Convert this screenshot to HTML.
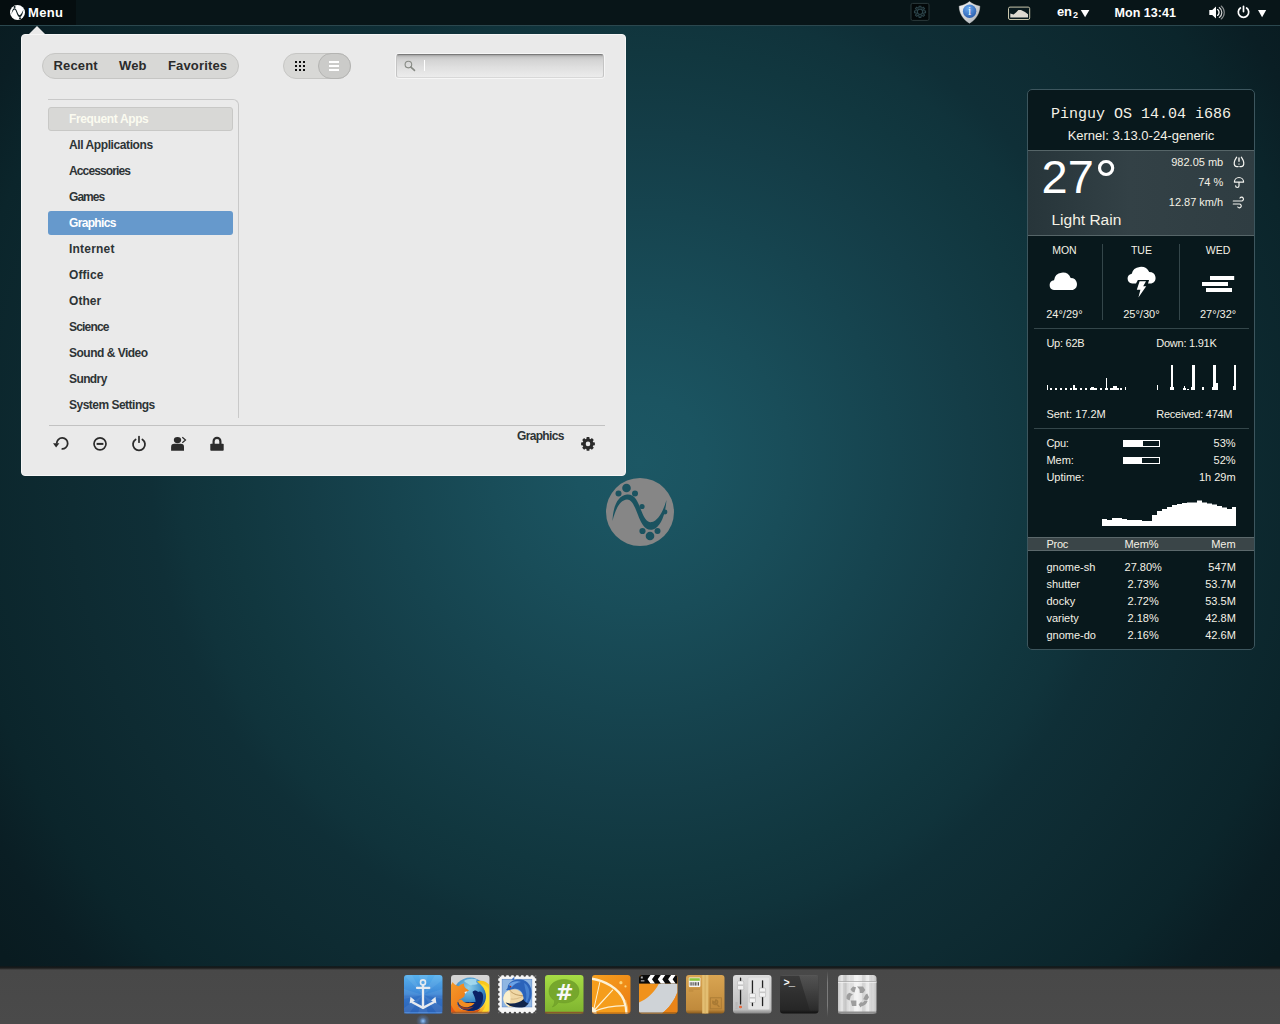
<!DOCTYPE html>
<html>
<head>
<meta charset="utf-8">
<title>Desktop</title>
<style>
*{box-sizing:border-box;margin:0;padding:0}
html,body{width:1280px;height:1024px;overflow:hidden}
body{position:relative;font-family:"Liberation Sans",sans-serif;
background:#091b20 radial-gradient(circle at 640px 462px,rgb(28,87,100) 0,rgb(27,84,97) 65px,rgb(25,77,89) 150px,rgb(22,68,79) 250px,rgb(20,61,71) 330px,rgb(17,55,63) 410px,rgb(16,51,59) 460px,rgb(15,47,55) 490px,rgb(14,43,50) 570px,rgb(11,37,43) 685px,rgb(10,30,36) 745px,rgb(9,27,32) 805px);}
.abs{position:absolute}
/* top panel */
#panel{position:absolute;left:0;top:0;width:1280px;height:26px;background:#081518;border-bottom:1px solid #2b474e}
#menubtn{position:absolute;left:0;top:0;width:76px;height:25px;background:#050d0f}
#panel .t{position:absolute;color:#fff;font-weight:bold;font-size:13px;line-height:25px;top:0;white-space:nowrap}
/* popup */
#popup{position:absolute;left:21px;top:34px;width:605px;height:442px;background:#eaeaea;border:1px solid #f6f6f6;border-radius:4px}
#arrow{position:absolute;left:28px;top:26px;width:0;height:0;border-left:9px solid transparent;border-right:9px solid transparent;border-bottom:9px solid #eaeaea}
.pill{position:absolute;background:#d8d8d6;border:1px solid #c6c6c4;border-radius:13px}
.pill span{position:absolute;top:0;line-height:24px;font-size:13px;font-weight:bold;color:#2b2b2b;white-space:nowrap;letter-spacing:.15px}
#cats{position:absolute;left:48px;top:99px;width:191px;height:319px;border-top:1px solid #c9c9c9;border-right:1px solid #c9c9c9;border-top-right-radius:6px}
.cat{position:absolute;left:48px;width:185px;height:24px;line-height:25px;padding-left:21px;font-size:12px;font-weight:bold;color:#2e3436;letter-spacing:-.45px;border-radius:3px;white-space:nowrap}
#search{position:absolute;left:396px;top:54px;width:208px;height:24px;border-radius:3px;border:1px solid #c4c4c4;border-top-color:#7a7a7a;border-bottom-color:#d8d8d8;box-shadow:0 0 0 1px rgba(255,255,255,.55);background:linear-gradient(#a2a2a2 0,#c6c6c6 2px,#d3d3d3 5px,#dfdfdf 12px,#ececec 100%)}
/* conky */
#conky{position:absolute;left:1027px;top:89px;width:228px;height:561px;border:1px solid #3d565e;border-radius:5px;background:#08181c;overflow:hidden;color:#f4f1e6}
#conky .x{position:absolute;white-space:nowrap;font-size:11px;line-height:13px}
#conky .r{text-align:right}
#conky .hl{position:absolute;left:6px;width:215px;height:1px;background:#34464a}
/* dock */
#dock{position:absolute;left:0;top:966px;width:1280px;height:58px;background:linear-gradient(rgba(16,22,24,.55) 0,#15191a 1px,#1b1c1c 2px,#333 3px,#484848 4px,#4a4a4a 100%)}
.ic{position:absolute;top:975px;width:39px;height:39px}
</style>
</head>
<body>
<!-- wallpaper logo -->
<svg class="abs" style="left:606px;top:478px" width="68" height="68" viewBox="0 0 68 68">
<circle cx="34" cy="34" r="34" fill="#868686"/>
<g fill="#1b5360">
<path d="M6.5 43 C7 28 12 17.5 21 16.5 C29 16 32 24 35 32 C38 40 41 45 46 44 C52 42.5 57 34 60.5 22 C59.5 36 55 49 47 51.5 C39 53.5 35 45 32 37 C29 29 26 21.5 21 21.5 C14 22 9.5 31 6.5 43Z"/>
<circle cx="20.5" cy="10" r="4.3"/><circle cx="12.5" cy="15.5" r="3"/><circle cx="29" cy="15.5" r="3"/>
<circle cx="36" cy="28.5" r="2.6"/><circle cx="59" cy="34" r="2.4"/>
<circle cx="44" cy="58" r="4.3"/><circle cx="36.5" cy="53" r="3.1"/><circle cx="51.5" cy="53" r="3"/>
</g>
</svg>

<!-- TOP PANEL -->
<div id="panel">
<div id="menubtn"></div>
<svg class="abs" style="left:10px;top:5px" width="15" height="15" viewBox="0 0 15 15"><circle cx="7.5" cy="7.5" r="7.5" fill="#fff"/><path d="M1.5 9.5 C2 5 3.2 3.2 4.6 3.2 C6.2 3.2 7 6 8 8.5 C8.8 10.3 9.6 10.6 10.6 9.6 C11.8 8.3 12.6 6.5 13.4 4.5 C13 8 12 11.6 10 12 C8.2 12.2 7.4 10 6.6 8 C5.8 6 5.4 4.6 4.6 4.6 C3.4 4.8 2.3 7 1.5 9.5Z" fill="#0a1a1e"/><circle cx="4.6" cy="2" r="1" fill="#0a1a1e"/><circle cx="10" cy="13.2" r="1" fill="#0a1a1e"/></svg>
<div class="t" style="left:28px;letter-spacing:.35px">Menu</div>
<svg class="abs" style="left:900px;top:0" width="380" height="25" viewBox="900 0 380 25">
<defs><linearGradient id="gSh" x1="0" y1="0" x2="1" y2="1"><stop offset="0" stop-color="#fbfbfb"/><stop offset="1" stop-color="#a9adb2"/></linearGradient><radialGradient id="gI" cx=".4" cy=".3" r=".8"><stop offset="0" stop-color="#6aaaf0"/><stop offset="1" stop-color="#2456a8"/></radialGradient></defs>
<rect x="911" y="3.4" width="18" height="17" rx="1.5" fill="#030809" stroke="#2b3a3c" stroke-width="1"/>
<path d="M918.98 7.73 L919.12 6.27 L920.88 6.27 L921.02 7.73 L922.16 8.20 L923.29 7.27 L924.53 8.51 L923.60 9.64 L924.07 10.78 L925.53 10.92 L925.53 12.68 L924.07 12.82 L923.60 13.96 L924.53 15.09 L923.29 16.33 L922.16 15.40 L921.02 15.87 L920.88 17.33 L919.12 17.33 L918.98 15.87 L917.84 15.40 L916.71 16.33 L915.47 15.09 L916.40 13.96 L915.93 12.82 L914.47 12.68 L914.47 10.92 L915.93 10.78 L916.40 9.64 L915.47 8.51 L916.71 7.27 L917.84 8.20Z" fill="none" stroke="#2c444a" stroke-width="1.1"/><circle cx="920" cy="11.8" r="2.7" fill="none" stroke="#2c444a" stroke-width="1.1"/>
<path d="M969.5 1.6 C972.5 4 976 5.6 979.8 6.2 C979.6 14 975.5 19.6 969.5 23.2 C963.5 19.6 959.4 14 959.2 6.2 C963 5.6 966.5 4 969.5 1.6Z" fill="url(#gSh)" stroke="#d8d8d8" stroke-width=".5"/>
<circle cx="969.6" cy="11.2" r="6.7" fill="url(#gI)"/>
<text x="969.7" y="15" font-family="Liberation Serif,serif" font-size="11.5" text-anchor="middle" fill="#fff">i</text>
<rect x="1008.5" y="7.1" width="21.2" height="12.4" rx="1.5" fill="#0a1a1e" stroke="#c9c6ac" stroke-width="1"/>
<path d="M1010.3 17.6 L1010.3 13.6 L1013.6 14.6 L1016 12.6 L1018.4 10 L1021 10 L1025 12 L1028 14.2 L1028 17.6Z" fill="#dedad2"/>
<path d="M1080.8 10 L1089.4 10 L1085.1 17.2Z" fill="#fff"/><path d="M1258 10 L1266.2 10 L1262.1 17.2Z" fill="#fff"/>
<path d="M1209.3 10 H1212.2 L1216 6.4 V18.6 L1212.2 15 H1209.3Z" fill="#fff"/>
<g fill="none" stroke-linecap="round"><path d="M1217.6 9.6 A3.6 3.6 0 0 1 1217.6 15.4" stroke="#fff" stroke-width="1.3"/><path d="M1219.3 7.6 A6 6 0 0 1 1219.3 17.4" stroke="#d0d0d0" stroke-width="1.2"/><path d="M1221.2 6 A8.4 8.4 0 0 1 1221.2 19" stroke="#8a8f90" stroke-width="1.1"/></g>
<path d="M1240.4 8 A5.2 5.2 0 1 0 1246.6 8" fill="none" stroke="#fff" stroke-width="1.7" stroke-linecap="round"/><path d="M1243.5 6.4 V11.6" stroke="#fff" stroke-width="1.7" stroke-linecap="round"/>
</svg>
<div class="t" style="left:1057px;top:-1px;font-size:13px;letter-spacing:-.3px">en<span style="font-size:9px;position:relative;top:2px;left:1.5px">2</span></div>
<div class="t" style="left:1114.5px;top:1px;font-size:12.5px;letter-spacing:.05px">Mon 13:41</div>
</div>

<!-- MENU POPUP -->
<div id="arrow"></div>
<div id="popup"></div>
<div class="pill" style="left:42px;top:53px;width:197px;height:26px">
<span style="left:10.5px">Recent</span><span style="left:76px">Web</span><span style="left:125px">Favorites</span>
</div>
<div class="pill" style="left:283px;top:53px;width:68px;height:26px"></div>
<div class="pill" style="left:318px;top:53px;width:33px;height:26px;background:#cbcbc9;border-color:#b4b4b2"></div>
<div id="search"></div>
<div id="cats"></div>
<div class="cat" style="top:107px;background:#d8d8d6;border:1px solid #c8c8c6;color:#fbfbf0;line-height:23px;padding-left:20px;letter-spacing:-0.37px">Frequent Apps</div>
<div class="cat" style="top:133px;letter-spacing:-0.41px">All Applications</div>
<div class="cat" style="top:159px;letter-spacing:-0.87px">Accessories</div>
<div class="cat" style="top:185px;letter-spacing:-0.95px">Games</div>
<div class="cat" style="top:211px;background:#6699cc;color:#fff;letter-spacing:-0.66px">Graphics</div>
<div class="cat" style="top:237px;letter-spacing:0.2px">Internet</div>
<div class="cat" style="top:263px;letter-spacing:0.08px">Office</div>
<div class="cat" style="top:289px;letter-spacing:0.07px">Other</div>
<div class="cat" style="top:315px;letter-spacing:-0.82px">Science</div>
<div class="cat" style="top:341px;letter-spacing:-0.5px">Sound &amp; Video</div>
<div class="cat" style="top:367px;letter-spacing:-0.6px">Sundry</div>
<div class="cat" style="top:393px;letter-spacing:-0.51px">System Settings</div>
<div class="abs" style="left:49px;top:425px;width:556px;height:1px;background:#c2c2c2"></div>
<div class="cat" style="left:517px;top:424px;width:60px;padding-left:0;letter-spacing:-0.66px">Graphics</div>

<svg class="abs" style="left:21px;top:34px" width="605" height="442" viewBox="21 34 605 442">
<g fill="#111" shape-rendering="crispEdges"><rect x="295" y="61" width="2" height="2"/><rect x="295" y="65" width="2" height="2"/><rect x="295" y="69" width="2" height="2"/><rect x="299" y="61" width="2" height="2"/><rect x="299" y="65" width="2" height="2"/><rect x="299" y="69" width="2" height="2"/><rect x="303" y="61" width="2" height="2"/><rect x="303" y="65" width="2" height="2"/><rect x="303" y="69" width="2" height="2"/></g>
<g fill="#fff" shape-rendering="crispEdges"><rect x="329" y="61" width="10" height="2"/><rect x="329" y="65" width="10" height="2"/><rect x="329" y="69" width="10" height="2"/></g>
<circle cx="408.4" cy="64.6" r="3.3" fill="none" stroke="#878a84" stroke-width="1.1"/><path d="M410.9 67.1 L414.5 70.4" stroke="#878a84" stroke-width="1.6" stroke-linecap="round"/>
<rect x="424" y="60" width="1" height="11" fill="#fff" shape-rendering="crispEdges"/>
<path d="M56.7 443.6 A5.5 5.5 0 1 1 61.6 448.9" fill="none" stroke="#2b2b2b" stroke-width="1.8"/><path d="M53 443.2 L59.4 443.2 L56.1 447.6Z" fill="#2b2b2b"/>
<circle cx="100" cy="443.8" r="6" fill="none" stroke="#2b2b2b" stroke-width="1.7"/><rect x="96.6" y="442.9" width="6.8" height="2" fill="#2b2b2b"/>
<path d="M135.6 439.4 A6 6 0 1 0 142.4 439.4" fill="none" stroke="#2b2b2b" stroke-width="1.8" stroke-linecap="round"/><path d="M139 436.6 V442.2" stroke="#2b2b2b" stroke-width="1.7" stroke-linecap="round"/>
<ellipse cx="177.5" cy="440.1" rx="3.7" ry="3.1" fill="#2b2b2b"/><path d="M171.1 450.8 V447 A3.2 3.2 0 0 1 174.3 443.8 H180.8 A3.2 3.2 0 0 1 184 447 V450.8Z" fill="#2b2b2b"/><path d="M182.3 437.3 L185.5 440 L182.3 442.7" fill="none" stroke="#2b2b2b" stroke-width="1.2"/>
<rect x="210.3" y="443.7" width="13.4" height="7" rx=".8" fill="#2b2b2b"/><path d="M213.6 444 V441.3 A3.4 3.4 0 0 1 220.4 441.3 V444" fill="none" stroke="#2b2b2b" stroke-width="2.2"/>
<path d="M586.42 438.73 L586.65 437.03 L589.35 437.03 L589.58 438.73 L590.54 439.13 L591.90 438.09 L593.81 440.00 L592.77 441.36 L593.17 442.32 L594.87 442.55 L594.87 445.25 L593.17 445.48 L592.77 446.44 L593.81 447.80 L591.90 449.71 L590.54 448.67 L589.58 449.07 L589.35 450.77 L586.65 450.77 L586.42 449.07 L585.46 448.67 L584.10 449.71 L582.19 447.80 L583.23 446.44 L582.83 445.48 L581.13 445.25 L581.13 442.55 L582.83 442.32 L583.23 441.36 L582.19 440.00 L584.10 438.09 L585.46 439.13Z M590.3 443.9 A2.3 2.3 0 1 0 585.7 443.9 A2.3 2.3 0 1 0 590.3 443.9Z" fill="#2b2b2b" fill-rule="evenodd"/>
</svg>
<!-- CONKY -->
<div id="conky">
<div class="abs" style="left:0;top:0;width:226px;text-align:center;font-family:'Liberation Mono',monospace;font-size:15px;line-height:18px;top:16px;white-space:nowrap">Pinguy OS 14.04 i686</div>
<div class="abs" style="left:0;width:226px;text-align:center;font-size:13px;line-height:16px;top:38px;white-space:nowrap">Kernel: 3.13.0-24-generic</div>
<div class="abs" style="left:0;top:60px;width:226px;height:86px;background:linear-gradient(90deg,#27353a 0,#334146 45%,#2f3d42 100%);border-top:1px solid #566568;border-bottom:1px solid #566568"></div>
<div class="abs" style="left:13.5px;top:61px;font-size:47px;line-height:52px;color:#fff;white-space:nowrap">27<span style="font-size:58px;line-height:52px;position:absolute;left:53px;top:2.5px">°</span></div>
<div class="abs" style="left:23.5px;top:120px;font-size:15.5px;line-height:20px;white-space:nowrap">Light Rain</div>
<div class="x r" style="right:30.8px;top:65.5px;">982.05 mb</div>
<div class="x r" style="right:30.8px;top:85.5px;">74 %</div>
<div class="x r" style="right:30.8px;top:105.5px;">12.87 km/h</div>
<div class="x" style="left:-3.6px;width:80px;text-align:center;top:153.5px;font-size:10.5px">MON</div>
<div class="x" style="left:-3.6px;width:80px;text-align:center;top:217.5px;">24°/29°</div>
<div class="x" style="left:73.4px;width:80px;text-align:center;top:153.5px;font-size:10.5px">TUE</div>
<div class="x" style="left:73.4px;width:80px;text-align:center;top:217.5px;">25°/30°</div>
<div class="x" style="left:150.1px;width:80px;text-align:center;top:153.5px;font-size:10.5px">WED</div>
<div class="x" style="left:150.1px;width:80px;text-align:center;top:217.5px;">27°/32°</div>
<div class="abs" style="left:74px;top:154px;width:1px;height:76px;background:#34464a"></div>
<div class="abs" style="left:151px;top:154px;width:1px;height:76px;background:#34464a"></div>
<div class="hl" style="top:238px"></div>
<div class="hl" style="top:338px"></div>
<div class="x" style="left:18.4px;top:246.5px;letter-spacing:-.25px">Up: 62B</div>
<div class="x" style="left:128.3px;top:246.5px;letter-spacing:-.25px">Down: 1.91K</div>
<div class="x" style="left:18.4px;top:317.5px;">Sent: 17.2M</div>
<div class="x" style="left:128.3px;top:317.5px;letter-spacing:-.25px">Received: 474M</div>
<div class="x" style="left:18.4px;top:346.5px;letter-spacing:-.25px">Cpu:</div>
<div class="x r" style="right:18.4px;top:346.5px;">53%</div>
<div class="x" style="left:18.4px;top:363.5px;">Mem:</div>
<div class="x r" style="right:18.4px;top:363.5px;">52%</div>
<div class="x" style="left:18.4px;top:380.5px;">Uptime:</div>
<div class="x r" style="right:18.4px;top:380.5px;">1h 29m</div>
<div class="abs" style="left:95px;top:350px;width:37px;height:7px;border:1px solid #fff"><div style="width:19px;height:5px;background:#fff"></div></div>
<div class="abs" style="left:95px;top:367px;width:37px;height:7px;border:1px solid #fff"><div style="width:18px;height:5px;background:#fff"></div></div>
<div class="abs" style="left:0;top:447px;width:226px;height:14px;background:#3a4548;border-top:1px solid #5b686b;border-bottom:1px solid #5b686b"></div>
<div class="x" style="left:18.4px;top:447.5px;letter-spacing:-.25px">Proc</div>
<div class="x" style="left:73.5px;width:80px;text-align:center;top:447.5px;">Mem%</div>
<div class="x r" style="right:18.4px;top:447.5px;">Mem</div>
<div class="x" style="left:18.4px;top:470.5px;">gnome-sh</div>
<div class="x" style="left:75.2px;width:80px;text-align:center;top:470.5px;">27.80%</div>
<div class="x r" style="right:18.2px;top:470.5px;">547M</div>
<div class="x" style="left:18.4px;top:487.5px;">shutter</div>
<div class="x" style="left:75.2px;width:80px;text-align:center;top:487.5px;">2.73%</div>
<div class="x r" style="right:18.2px;top:487.5px;">53.7M</div>
<div class="x" style="left:18.4px;top:504.5px;">docky</div>
<div class="x" style="left:75.2px;width:80px;text-align:center;top:504.5px;">2.72%</div>
<div class="x r" style="right:18.2px;top:504.5px;">53.5M</div>
<div class="x" style="left:18.4px;top:521.5px;">variety</div>
<div class="x" style="left:75.2px;width:80px;text-align:center;top:521.5px;">2.18%</div>
<div class="x r" style="right:18.2px;top:521.5px;">42.8M</div>
<div class="x" style="left:18.4px;top:538.5px;">gnome-do</div>
<div class="x" style="left:75.2px;width:80px;text-align:center;top:538.5px;">2.16%</div>
<div class="x r" style="right:18.2px;top:538.5px;">42.6M</div>
<svg class="abs" style="left:0;top:0" width="226" height="559" viewBox="1028 90 226 559">
<g fill="none" stroke="#f4f4f0" stroke-width="1.2" stroke-linecap="round" stroke-linejoin="round">
<path d="M1236.7 157.2 C1235 159.6 1233.9 162 1234.3 164.3 C1234.6 165.8 1235.5 166.6 1236.8 166.6 L1238.2 166.6 M1241.3 157.2 C1243 159.6 1244.1 162 1243.7 164.3 C1243.4 165.8 1242.5 166.6 1241.2 166.6 L1239.8 166.6"/>
<path d="M1239 157.4 V161.8 M1238.5 164.1 H1239.5" stroke-width="1.4" stroke-linecap="butt"/><path d="M1234.4 182.1 A4.6 4.6 0 0 1 1243.6 182.1 Z"/><path d="M1239 182.3 V185.8 A1.7 1.7 0 0 1 1235.6 185.8"/>
<path d="M1233.3 201 H1241.6 A1.9 1.9 0 1 0 1240 198"/><path d="M1233.3 204 H1239.4 A1.9 1.9 0 1 1 1237.8 207"/>
</g>
<g fill="#fff">
<path transform="translate(1063.9 281.5) scale(1.06 1.05) translate(-1063.9 -282)" d="M1054.5 290.2 A4.8 4.8 0 0 1 1054.6 280.7 A8.2 8.2 0 0 1 1070.3 278.6 A6 6 0 0 1 1072.4 290.2 Z"/>
<path transform="translate(1142 0) scale(1.09 1) translate(-1142 0)" d="M1133 283.6 A5 5 0 0 1 1132.6 273.8 A8.4 8.4 0 0 1 1148.6 272 A6 6 0 0 1 1150.6 283.6 L1147.5 283.6 L1148.5 280 L1138.2 280 L1136.5 283.6 Z"/>
<path d="M1139.6 281.3 L1146 281.3 L1143.2 286.3 L1146.2 286.3 L1138.4 297.6 L1140.4 289.8 L1136.8 289.8 Z"/>
<rect x="1210" y="276" width="24.2" height="4"/><rect x="1202" y="282" width="26" height="4"/><rect x="1206" y="288" width="26" height="4"/>
</g>
<g fill="#fff" shape-rendering="crispEdges"><rect x="1046.6" y="385.0" width="1.5" height="5.0"/><rect x="1050.0" y="388.0" width="1.6" height="2.0"/><rect x="1055.2" y="388.0" width="2.0" height="2.0"/><rect x="1060.2" y="388.0" width="2.0" height="2.0"/><rect x="1065.2" y="388.0" width="2.0" height="2.0"/><rect x="1070.0" y="388.0" width="2.0" height="2.0"/><rect x="1073.2" y="385.0" width="1.8" height="5.0"/><rect x="1075.0" y="388.0" width="1.8" height="2.0"/><rect x="1080.2" y="388.0" width="2.0" height="2.0"/><rect x="1085.2" y="388.0" width="2.0" height="2.0"/><rect x="1090.0" y="388.0" width="4.7" height="2.0"/><rect x="1091.2" y="387.0" width="2.6" height="3.0"/><rect x="1094.9" y="388.0" width="1.8" height="2.0"/><rect x="1100.2" y="388.0" width="2.0" height="2.0"/><rect x="1105.2" y="388.0" width="2.8" height="2.0"/><rect x="1106.0" y="378.0" width="1.4" height="12.0"/><rect x="1110.0" y="388.0" width="8.5" height="2.0"/><rect x="1113.4" y="386.0" width="3.9" height="4.0"/><rect x="1120.0" y="388.0" width="2.0" height="2.0"/><rect x="1124.8" y="387.0" width="1.5" height="3.0"/><rect x="1156.6" y="385.0" width="1.5" height="5.0"/><rect x="1170.7" y="364.8" width="2.3" height="25.2"/><rect x="1170.0" y="386.5" width="3.8" height="3.5"/><rect x="1182.8" y="388.0" width="3.2" height="2.0"/><rect x="1183.6" y="386.0" width="1.4" height="4.0"/><rect x="1186.7" y="389.0" width="2.3" height="1.0"/><rect x="1192.2" y="364.8" width="2.3" height="25.2"/><rect x="1190.6" y="387.0" width="4.4" height="3.0"/><rect x="1201.5" y="387.0" width="2.5" height="3.0"/><rect x="1213.3" y="364.8" width="2.2" height="25.2"/><rect x="1211.7" y="387.0" width="6.3" height="3.0"/><rect x="1216.0" y="382.6" width="2.0" height="7.4"/><rect x="1234.0" y="364.8" width="2.2" height="25.2"/><rect x="1232.8" y="386.0" width="3.4" height="4.0"/></g>
<path d="M1102 526 L1102 519 L1107 519 L1107 520 L1112 520 L1112 518 L1117 518 L1117 518 L1122 518 L1122 519 L1127 519 L1127 520 L1132 520 L1132 520 L1137 520 L1137 520 L1142 520 L1142 521 L1147 521 L1147 521 L1152 521 L1152 515 L1157 515 L1157 511 L1162 511 L1162 509 L1167 509 L1167 507 L1172 507 L1172 505 L1177 505 L1177 504 L1182 504 L1182 503 L1187 503 L1187 502.5 L1192 502.5 L1192 502.5 L1197 502.5 L1197 500.5 L1202 500.5 L1202 502.5 L1207 502.5 L1207 503.5 L1212 503.5 L1212 504.5 L1217 504.5 L1217 506 L1222 506 L1222 507.5 L1227 507.5 L1227 509 L1232 509 L1232 507 L1236 507 L1236 526 Z" fill="#fff"/>
</svg>
</div>

<!-- DOCK -->
<div id="dock"></div>
<svg width="0" height="0" style="position:absolute"><defs>
<linearGradient id="gBlue" x1="0" y1="0" x2="0" y2="1"><stop offset="0" stop-color="#58b2ee"/><stop offset=".5" stop-color="#3c86d6"/><stop offset=".55" stop-color="#3274c8"/><stop offset="1" stop-color="#2c62b6"/></linearGradient>
<linearGradient id="gGreen" x1="0" y1="0" x2="0" y2="1"><stop offset="0" stop-color="#a6dc45"/><stop offset="1" stop-color="#7eb32f"/></linearGradient>
<linearGradient id="gOr" x1="0" y1="0" x2="1" y2="1"><stop offset="0" stop-color="#f7a01e"/><stop offset="1" stop-color="#ea7c12"/></linearGradient>
<linearGradient id="gBox" x1="0" y1="0" x2="0" y2="1"><stop offset="0" stop-color="#d9a552"/><stop offset=".9" stop-color="#c08a3c"/><stop offset="1" stop-color="#8a5a1c"/></linearGradient>
<linearGradient id="gMix" x1="0" y1="0" x2="0" y2="1"><stop offset="0" stop-color="#dcdcdc"/><stop offset=".9" stop-color="#bebebe"/><stop offset="1" stop-color="#868686"/></linearGradient>
<linearGradient id="gTerm" x1="0" y1="0" x2="0" y2="1"><stop offset="0" stop-color="#3a3a3a"/><stop offset=".9" stop-color="#262626"/><stop offset="1" stop-color="#111"/></linearGradient>
<linearGradient id="gTrash" x1="0" y1="0" x2="1" y2="0"><stop offset="0" stop-color="#c4c4c4"/><stop offset=".1" stop-color="#e6e6e6"/><stop offset=".2" stop-color="#d2d2d2"/><stop offset=".35" stop-color="#ececec"/><stop offset=".5" stop-color="#f4f4f4"/><stop offset=".65" stop-color="#e2e2e2"/><stop offset=".8" stop-color="#eeeeee"/><stop offset=".92" stop-color="#d6d6d6"/><stop offset="1" stop-color="#c0c0c0"/></linearGradient>
<radialGradient id="gGlobe" cx=".45" cy=".3" r=".8"><stop offset="0" stop-color="#8fd0ea"/><stop offset=".5" stop-color="#3f8fca"/><stop offset="1" stop-color="#0b2a78"/></radialGradient>
<linearGradient id="gFox" x1="0" y1="0" x2="1" y2="1"><stop offset="0" stop-color="#f59a2a"/><stop offset=".6" stop-color="#ee7a18"/><stop offset="1" stop-color="#d4480e"/></linearGradient>
<linearGradient id="gFlame" x1="0" y1="0" x2="0" y2="1"><stop offset="0" stop-color="#f9c21a"/><stop offset=".6" stop-color="#ffe83a"/><stop offset="1" stop-color="#f59a1e"/></linearGradient>
<radialGradient id="gDot" cx=".5" cy=".5" r=".5"><stop offset="0" stop-color="#9ccbff" stop-opacity=".95"/><stop offset=".3" stop-color="#6aa8f0" stop-opacity=".55"/><stop offset="1" stop-color="#4a88e0" stop-opacity="0"/></radialGradient>
<linearGradient id="gSheen" x1="0" y1="0" x2="0" y2="1"><stop offset="0" stop-color="#fff" stop-opacity=".13"/><stop offset="1" stop-color="#fff" stop-opacity=".02"/></linearGradient>
<clipPath id="cTile"><rect x="0" y="0" width="38.5" height="38.5" rx="3"/></clipPath>
</defs></svg>
<svg class="ic" style="left:404px" width="39" height="39" viewBox="0 0 39 39"><rect width="38.5" height="38.5" rx="3" fill="url(#gBlue)"/><rect y="37" width="38.5" height="1.5" rx=".7" fill="#4f8ede" opacity=".7"/>
<g clip-path="url(#cTile)" fill="#fff" opacity=".07"><path d="M19 20 L0 0 L8 0Z M19 20 L15 0 L24 0Z M19 20 L31 0 L38.5 0 L38.5 5Z M19 20 L38.5 14 L38.5 24Z M19 20 L38.5 32 L38.5 38.5 L33 38.5Z M19 20 L24 38.5 L14 38.5Z M19 20 L5 38.5 L0 38.5 L0 33Z M19 20 L0 24 L0 14Z"/></g>
<g fill="none" stroke="#e6eaf0" stroke-linecap="round"><circle cx="19" cy="7.4" r="2.5" stroke-width="1.6"/><path d="M19 10.4 V32.5" stroke-width="2.3"/><path d="M13 12.9 H25.3" stroke-width="2.2"/><path d="M8.3 27.3 L19 32.8 L29.7 27.3" stroke-width="2.4" stroke-linejoin="miter"/></g>
<path d="M6.5 21.8 L5.6 28.6 L11 25.4Z M31.5 21.8 L32.4 28.6 L27 25.4Z" fill="#e6eaf0"/></svg>
<svg class="ic" style="left:451px" width="39" height="39" viewBox="0 0 39 39"><rect width="38.5" height="38.5" rx="3" fill="#d4d4d4"/>
<g clip-path="url(#cTile)"><circle cx="19.2" cy="19.6" r="17" fill="url(#gGlobe)"/>
<path d="M13 6 C16 3.6 22 3 26 4.6 C24.5 6 25 8 27 9 C24 10.4 22 9 20 10.6 C18 9.400000000000002 15 8 13 6Z" fill="#a6daee" opacity=".9"/>
<path d="M21.5 17 C23 15 25.5 15 27 17 C29 15.6 31.5 17 32 20 C32.6 25 31 30 27.6 33.4 C25 35.6 21 35.6 18.6 34 C22 32.6 24.5 30 24.6 26.5 C24.6 23 22.6 20 21.5 17Z" fill="#0a2266"/>
<path d="M6.5 27 C8 34 16 37.5 25 35 L25 27Z" fill="#0a2266"/>
<path d="M25.9 6.6 C30 4.6 35 6 38.5 10 L38.5 36 C36 38 33 38.5 29.6 38.5 L22 36.4 C25 36 27.6 35 29.6 33 C32 30.6 34.6 27 34.9 23.2 C35.2 20 34.8 17.6 34.1 15.8 C33 12.6 31.6 10.6 29.6 9.4 C28.4 8.6 27 7.6 25.9 6.6Z" fill="url(#gFlame)"/>
<path d="M29.6 9.4 C32.6 9 35.6 11 37.9 14.2 C38.4 21 38.4 28 38.2 35.2 C36 37.4 33 38.3 29.6 38.5 C33 35 35.6 30 35.6 24 C35.6 18 33.6 13 29.6 9.4Z" fill="#ffe030" opacity=".85"/>
<path d="M1.5 7.1 C2.6 9 4.6 10.6 7.9 11.2 C9.6 9.6 11.4 8.8 13.1 8.6 C12.6 10.6 13.6 12.4 15 13.4 C16.2 14 17.2 14.8 18 15.8 C16.4 16.6 14.8 17 13.9 18 C13.9 19.6 13.6 20.8 13.1 21.8 C12.4 22.4 11.6 22.8 10.9 23.2 C9 24 7.6 25 7.1 26.2 C6.2 27.2 6.2 28.4 6.4 29.2 C7 31 8 32.6 9.4 33.8 C11 34.8 12.8 35.2 14.6 35.2 C17 36 19.6 36.2 22 36 C24.6 35.6 27.4 34.8 29.6 33.8 C28 36.6 25 38.5 21 38.5 L0 38.5 L0 10 C.6 9 1.1 8 1.5 7.1Z" fill="url(#gFox)"/>
<path d="M7.1 26.2 C8.2 25 9.6 24.6 10.9 24.8 C11.6 26 12.4 26.7 13.1 27 C15 27.9 17 28 19.1 27.8 C20.8 27.9 22.4 28.1 23.6 28.1 C22 30.4 19.6 31.8 16.9 32.2 C14.8 32.4 12.8 32.2 10.9 31.5 C8.8 30.4 7.4 28.6 7.1 26.2Z" fill="#f28c22"/>
<path d="M6.6 29.4 C8 32.4 11 34.2 14.6 34.6 C17.6 34.8 20.6 33.6 23 31.2 C20.6 32.4 18 32.8 15.6 32.6 C12 32.3 9 31 6.6 29.4Z" fill="#c4450c" opacity=".75"/>
<path d="M13.3 17 L16.4 16.2 L14.5 18.7Z" fill="#fff" opacity=".9"/>
<path d="M0 38.5 L0 30 C1.6 33 3.2 36 6 38.5Z" fill="#dc3a10" opacity=".6"/></g>
<rect y="36.8" width="38.5" height="1.7" rx=".9" fill="#9a5a2a" opacity=".8"/></svg>
<svg class="ic" style="left:498px" width="39" height="39" viewBox="0 0 39 39"><rect x=".2" y=".2" width="38.1" height="38.1" rx="1" fill="#f6f6f6"/><g fill="#4a4a4a"><circle cx="2.2" cy="0.4" r="1.25"/><circle cx="2.2" cy="38.1" r="1.25"/><circle cx="0.4" cy="2.2" r="1.25"/><circle cx="38.1" cy="2.2" r="1.25"/><circle cx="7.1" cy="0.4" r="1.25"/><circle cx="7.1" cy="38.1" r="1.25"/><circle cx="0.4" cy="7.1" r="1.25"/><circle cx="38.1" cy="7.1" r="1.25"/><circle cx="12.0" cy="0.4" r="1.25"/><circle cx="12.0" cy="38.1" r="1.25"/><circle cx="0.4" cy="12.0" r="1.25"/><circle cx="38.1" cy="12.0" r="1.25"/><circle cx="16.9" cy="0.4" r="1.25"/><circle cx="16.9" cy="38.1" r="1.25"/><circle cx="0.4" cy="16.9" r="1.25"/><circle cx="38.1" cy="16.9" r="1.25"/><circle cx="21.8" cy="0.4" r="1.25"/><circle cx="21.8" cy="38.1" r="1.25"/><circle cx="0.4" cy="21.8" r="1.25"/><circle cx="38.1" cy="21.8" r="1.25"/><circle cx="26.7" cy="0.4" r="1.25"/><circle cx="26.7" cy="38.1" r="1.25"/><circle cx="0.4" cy="26.7" r="1.25"/><circle cx="38.1" cy="26.7" r="1.25"/><circle cx="31.6" cy="0.4" r="1.25"/><circle cx="31.6" cy="38.1" r="1.25"/><circle cx="0.4" cy="31.6" r="1.25"/><circle cx="38.1" cy="31.6" r="1.25"/><circle cx="36.5" cy="0.4" r="1.25"/><circle cx="36.5" cy="38.1" r="1.25"/><circle cx="0.4" cy="36.5" r="1.25"/><circle cx="38.1" cy="36.5" r="1.25"/></g>
<rect x="4.2" y="4.3" width="29.6" height="27.6" fill="#8fb6e2" stroke="#5f8ccc" stroke-width=".7"/>
<path d="M9.6 13 C10 7 16 3.6 23 4.6 C30 5.6 34 11.6 33.6 19 C33.4 25 30.6 29.6 26 31.9 L20 31.9 C25 28 26.6 22 24 17.6 C21.6 13.6 16 12.6 12.6 15.6 L8 15 Z" fill="#2b63ba"/>
<path d="M13.4 4.6 L16.6 1.6 L16 5.2Z" fill="#3a72c8"/>
<path d="M11 9.6 C14 6.4 19 5.6 23 7 C19 7.400000000000001 15.6 9.6 13.6 12.6 C12.4 12 11.6 11 11 9.6Z" fill="#6aa2e6"/>
<path d="M26 8 C29.6 10 31.6 14 31.400000000000002 19 C31 24 29 28 26 31 C28.6 26 29 20 27.6 15.6 C27 13 26.6 10.6 26 8Z" fill="#4f8ad6" opacity=".8"/>
<path d="M5.6 22 C6.6 16.6 11.6 13.6 17.6 14.6 C22.6 15.6 25.6 19.6 25.6 24.6 C25.6 27.6 24.6 30 23 31.9 L10.6 31.9 C6.6 29.6 4.8 26 5.6 22Z" fill="#f0d8a6"/>
<path d="M5.6 22 C6.4 18.4 8.6 16 11.6 15 L12.6 24 L10.6 31.9 C6.6 29.6 4.8 26 5.6 22Z" fill="#fbf0cc"/>
<path d="M11.6 15 C14 18.6 19 20.6 25 20.6" stroke="#b48e56" stroke-width=".8" fill="none"/><path d="M12.6 24 C16 24.6 21 23.6 25 21" stroke="#caa870" stroke-width=".6" fill="none"/>
<path d="M7.6 27.6 C11 31.9 19 33.4 27 31.9 L30.6 28.6 C28 27.6 26 26 25.6 24 C22 28 14 29.6 7.6 27.6Z" fill="#10244a"/>
<circle cx="12.6" cy="11.6" r=".8" fill="#b02a1a"/></svg>
<svg class="ic" style="left:545px" width="39" height="39" viewBox="0 0 39 39"><rect width="38.5" height="38.5" rx="3" fill="url(#gGreen)"/><rect y="36.8" width="38.5" height="1.7" rx=".9" fill="#8a5a2a"/>
<path d="M19 4.5 C27.5 4.5 34 9.5 34 16.3 C34 23 27.5 28 19 28 C17 28 15 27.7 13.3 27.2 C12 29.5 10 31 7.3 32 C9 30 9.8 28 9.6 25.6 C6.1 23.5 4 20.2 4 16.3 C4 9.5 10.5 4.5 19 4.5Z" fill="#76a72c" stroke="#6a9a26" stroke-width=".5"/>
<text x="19.4" y="24.6" font-family="DejaVu Sans,sans-serif" font-weight="bold" font-size="21.5" text-anchor="middle" fill="#f8f8f8">#</text></svg>
<svg class="ic" style="left:592px" width="39" height="39" viewBox="0 0 39 39"><rect width="38.5" height="38.5" rx="3" fill="url(#gOr)"/>
<g clip-path="url(#cTile)"><path d="M-1 3.6 C12 5 27 13.5 32 25.5 C33.6 29.5 34.4 33.5 34.6 39 L-1 39Z" fill="#f59d1c"/>
<path d="M-1 3.6 C12 5 27 13.5 32 25.5 C33.6 29.5 34.4 33.5 34.6 39" fill="none" stroke="#fdf1d4" stroke-width="2.4"/>
<path d="M36 39 C36 34 35 29 33.5 25" fill="none" stroke="#f9c46a" stroke-width="1.2" opacity=".7"/>
<g stroke="#fdf0d0" stroke-linecap="round" fill="none"><path d="M1.5 35.5 L7.8 7.4" stroke-width="1"/><path d="M2 35.5 L20.6 15.2" stroke-width="1.2"/><path d="M3 36 C11 32.5 22 30.8 32.6 30.6" stroke-width="1.1"/></g>
<path d="M-1 31.5 C2 32 4.5 34.5 4.8 39 L-1 39Z" fill="#fdf3d8"/>
<circle cx="28.9" cy="7.7" r="1.6" fill="#fbd478"/><circle cx="33.5" cy="11.4" r="1.1" fill="#fbd478"/></g>
<rect y="37.3" width="38.5" height="1.2" rx=".6" fill="#a65a10" opacity=".55"/></svg>
<svg class="ic" style="left:639px" width="39" height="39" viewBox="0 0 39 39"><rect width="38.5" height="38.5" rx="3" fill="#f0921c"/>
<g clip-path="url(#cTile)"><path d="M0 27.5 C8 24 15 18 20 8.5 L38.5 8.5 L38.5 17 C35 26 30 33 23 38.5 L0 38.5Z" fill="#cfd3d7"/>
<path d="M23 38.5 C30 33 35 26 38.5 17 L38.5 38.5Z" fill="#ea8418"/>
<rect width="38.5" height="8.6" fill="#0c0c0c"/>
<g fill="#fff"><path d="M8.5 4.3 L11.5 0 L16 0 L13 4.3 L16 8.6 L11.5 8.6Z"/><path d="M18.800000000000001 4.3 L21.8 0 L26.3 0 L23.3 4.3 L26.3 8.6 L21.8 8.6Z"/><path d="M29.1 4.3 L32.1 0 L36.6 0 L33.6 4.3 L36.6 8.6 L32.1 8.6Z"/></g>
<rect x="1.8" y="1.5" width="2" height="2" fill="#aaa"/><rect x="1.8" y="5" width="3.6" height="1.6" fill="#888"/></g>
<rect y="37.3" width="38.5" height="1.2" rx=".6" fill="#7a4a10" opacity=".6"/></svg>
<svg class="ic" style="left:686px" width="39" height="39" viewBox="0 0 39 39"><rect width="38.5" height="38.5" rx="3" fill="url(#gBox)"/>
<rect x="16.2" y="0" width="6.2" height="38.5" fill="#e3be72"/><rect x="18.700000000000003" y="0" width=".8" height="38.5" fill="#d2a85a"/>
<rect x="2.8" y="2.6" width="11.6" height="9.4" rx="1" fill="#f6f6f2"/><rect x="3.4" y="3.2" width="10.4" height="2.6" fill="#8bc43c"/>
<g fill="#555"><rect x="3.8" y="7.2" width=".8" height="3.4"/><rect x="5.3" y="7.2" width="1.2" height="3.4"/><rect x="7.2" y="7.2" width=".7" height="3.4"/><rect x="8.6" y="7.2" width="1.3" height="3.4"/><rect x="10.5" y="7.2" width=".7" height="3.4"/><rect x="11.8" y="7.2" width="1.2" height="3.4"/></g>
<rect x="2.8" y="13.600000000000001" width="11" height=".9" fill="#b07e34" opacity=".7"/><rect x="2.8" y="15.5" width="4.5" height=".9" fill="#b07e34" opacity=".7"/>
<rect x="24.3" y="22.8" width="11" height="11" fill="none" stroke="#a97a34" stroke-width=".9"/>
<path d="M27 26.5 A2.3 2.3 0 1 0 30 25 L29 27 L27.8 27.4Z M29.5 28 L33 31.5" stroke="#a97a34" stroke-width="1.6" fill="none" stroke-linecap="round"/></svg>
<svg class="ic" style="left:733px" width="39" height="39" viewBox="0 0 39 39"><rect width="38.5" height="38.5" rx="3" fill="url(#gMix)"/>
<rect x="15" y="2.2" width="21.6" height="32.4" rx="1.5" fill="#e4e4e4" stroke="#cfcfcf" stroke-width=".5"/>
<g fill="#222"><rect x="6.9" y="2.5" width="1.3" height="27" rx=".6"/><rect x="18.8" y="5.2" width="1.3" height="26" rx=".6"/><rect x="28.9" y="5.2" width="1.3" height="26" rx=".6"/></g>
<g fill="#f2f2f2" stroke="#aaa" stroke-width=".5"><rect x="4.5" y="6" width="6.2" height="8.8" rx="1"/><rect x="16.3" y="18.5" width="6.2" height="9" rx="1"/><rect x="26.4" y="13" width="6.2" height="9" rx="1"/></g>
<g fill="#c8c8c8"><rect x="4.8" y="9.4" width="5.6" height="1.6"/><rect x="16.6" y="22" width="5.6" height="1.6"/><rect x="26.7" y="16.5" width="5.6" height="1.6"/></g>
<circle cx="7.5" cy="32" r="1.3" fill="#e8481c"/><circle cx="7.5" cy="32" r=".5" fill="#ffb060"/>
<g fill="#aaa"><rect x="2.4" y="27" width="2.3" height=".5"/><rect x="2.4" y="28.2" width="2.3" height=".5"/><rect x="2.4" y="29.400000000000002" width="2.3" height=".5"/><rect x="2.4" y="30.6" width="2.3" height=".5"/><rect x="2.4" y="31.8" width="2.3" height=".5"/><rect x="2.4" y="33" width="2.3" height=".5"/></g></svg>
<svg class="ic" style="left:780px" width="39" height="39" viewBox="0 0 39 39"><rect width="38.5" height="38.5" rx="3" fill="url(#gTerm)"/>
<g clip-path="url(#cTile)"><path d="M19 0 L38.5 0 L38.5 36 L30 36Z" fill="url(#gSheen)"/><rect width="38.5" height="1" fill="#585858" opacity=".7"/></g>
<text x="3.6" y="11.3" font-family="Liberation Mono,monospace" font-weight="bold" font-size="10.5" fill="#f4f4f4" letter-spacing="-1.2">&gt;_</text></svg>
<svg class="ic" style="left:838px" width="39" height="39" viewBox="0 0 39 39"><rect width="38.5" height="38.5" rx="3.5" fill="url(#gTrash)"/><g clip-path="url(#cTile)" fill="#000" opacity=".06"><rect x="5" width="3.6" height="38.5"/><rect x="12.4" width="3.4" height="38.5"/><rect x="24" width="3.6" height="38.5"/><rect x="31" width="3.4" height="38.5"/></g><rect y="36.5" width="38.5" height="2" rx="1" fill="#8e8e8e"/>
<rect x="0" y="6.2" width="38.5" height=".9" fill="#aaa"/><rect x="0" y="7.1" width="38.5" height=".7" fill="#fff" opacity=".8"/>
<g fill="#9d9d9d"><path d="M12.5 14.2 L15 11.6 L18 12.2 L16.5 17.6 L14 16.6Z"/><path d="M19 11.6 L25 11.6 L27.3 15 L25 18 L21.8 18 L21.5 14.6Z"/><path d="M27.6 19.600000000000001 L29.2 18.6 L31 22.200000000000003 L29 25.6 L25.200000000000003 24.200000000000003Z"/><path d="M29.6 26 C28.6 29.4 26 31 23.2 31.4 L22.6 32.6 L20.6 29.6 L23.4 26.5 L23.8 27.8 C25.200000000000003 27.4 26 26.6 26.6 25.4Z"/><path d="M12.6 25.6 L18.400000000000002 25.6 L18.400000000000002 31 L14 31 Z"/><path d="M8.6 24 C8 21 9 18.6 11.5 17.8 L15 19.5 L12.8 21 L11.6 25.5Z"/></g></svg>
<div class="abs" style="left:416px;top:1014px;width:14px;height:14px;background:radial-gradient(circle,rgba(160,205,255,.95) 0,rgba(120,175,245,.8) 14%,rgba(90,150,235,.35) 34%,rgba(70,130,220,0) 70%)"></div>
<div class="abs" style="left:827px;top:971px;width:1px;height:46px;background:linear-gradient(rgba(120,120,120,0),#7c7c7c 25%,#7c7c7c 75%,rgba(120,120,120,0))"></div>
</body>
</html>
